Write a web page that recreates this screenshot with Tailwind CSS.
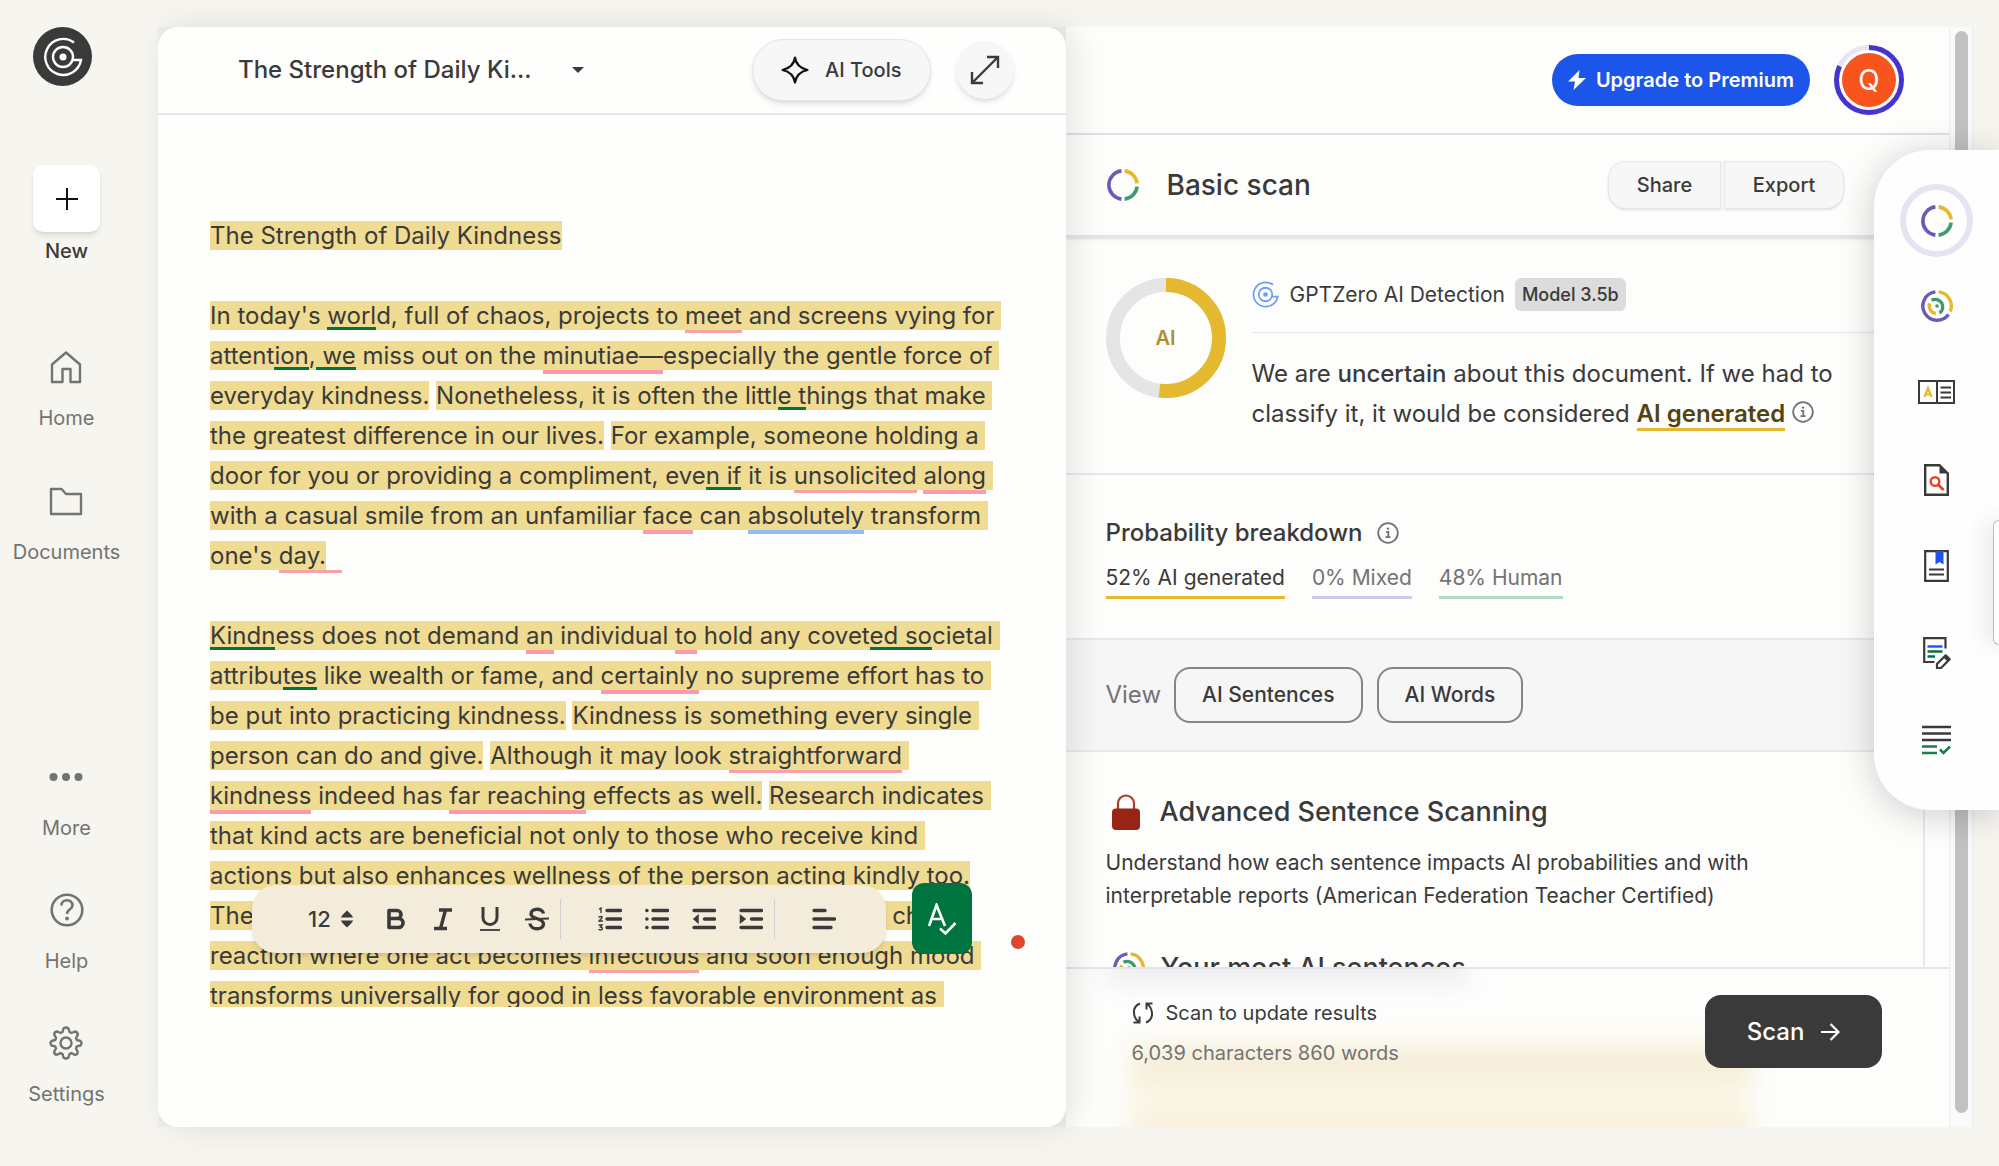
<!DOCTYPE html>
<html lang="en">
<head>
    <meta charset="UTF-8">
    <meta name="viewport" content="width=device-width, initial-scale=1.0">
    <title>The Strength of Daily Kindness</title>
    <script src="https://cdn.jsdelivr.net/npm/@tailwindcss/browser@4"></script>
</head>
<body class="bg-[#f6f5f0] font-['Inter',sans-serif] text-[#3a3a3a]">
    <!-- Shared icons -->
    <svg class="hidden">
        <symbol id="logo" viewBox="0 0 40 40" fill="none" stroke="currentColor">
            <path d="M31 5.5A18 18 0 1 0 38 23H29" />
            <circle cx="20" cy="20" r="10" />
            <circle cx="20" cy="20" r="3.5" fill="currentColor" stroke="none" />
        </symbol>
        <symbol id="ring" viewBox="0 0 32 32" fill="none" stroke-width="3.6">
            <path d="M14.4 1.9A14.2 14.2 0 0 0 14.4 30.1" stroke="#6a5cb5" />
            <path d="M17.6 1.9A14.2 14.2 0 0 1 30.1 14.4" stroke="#e5b92f" />
            <path d="M30.1 17.6A14.2 14.2 0 0 1 17.6 30.1" stroke="#3f9a6e" />
        </symbol>
        <symbol id="rings" viewBox="0 0 32 32" fill="none" stroke-width="3.4">
            <path d="M14.4 1.9A14.2 14.2 0 1 0 27.5 24.4" stroke="#6a5cb5" />
            <path d="M17.6 1.9A14.2 14.2 0 0 1 29.2 21.5" stroke="#e5b92f" />
            <path d="M10.5 10.3A7.6 7.6 0 0 1 18.5 23.2" stroke="#3f9a6e" />
            <path d="M8.8 13.4A7.6 7.6 0 0 0 14.8 23.6" stroke="#e5b92f" />
            <circle cx="16" cy="16" r="1.8" fill="#3f9a6e" stroke="none" />
        </symbol>
        <symbol id="info" viewBox="0 0 22 22" fill="none" stroke="#737373" stroke-width="1.8">
            <circle cx="11" cy="11" r="9.8" />
            <path d="M9 9.8h2.3v5M8.5 15.2h5" />
            <circle cx="11" cy="6.6" r="1.2" fill="#737373" stroke="none" />
        </symbol>
    </svg>

    <div class="flex h-screen overflow-hidden pt-[27px] pr-[26px] pb-[39px]">
        <!-- Sidebar -->
        <aside class="flex w-[158px] shrink-0 flex-col">
            <a href="#" aria-label="GPTZero" class="ml-[33px] flex size-[59px] items-center justify-center rounded-full bg-[#3a3a3a] text-white">
                <svg class="size-10" stroke-width="2.4"><use href="#logo" /></svg>
            </a>
            <nav class="mt-[79px] flex w-[133px] flex-1 flex-col items-center text-xl text-[#737373]">
                <a href="#" class="flex h-[100px] flex-col items-center justify-between font-medium text-[#3a3a3a]">
                    <span class="flex size-[67px] items-center justify-center rounded-[10px] bg-white shadow-md">
                        <svg class="size-6" viewBox="0 0 24 24" stroke="#111" stroke-width="2"><path d="M12 1v22M1 12h22" /></svg>
                    </span>
                    New
                </a>
                <a href="#" class="mt-[85px] flex h-[82px] flex-col items-center justify-between">
                    <svg class="size-[34px]" viewBox="0 0 34 34" fill="none" stroke="currentColor" stroke-width="2.4" stroke-linejoin="round"><path d="M3 32V14.5L17 2.5 31 14.5V32H21.5V19H13.5V32z" /></svg>
                    Home
                </a>
                <a href="#" class="mt-[52px] flex h-[82px] flex-col items-center justify-between">
                    <svg class="size-[34px]" viewBox="0 0 34 34" fill="none" stroke="currentColor" stroke-width="2.4" stroke-linejoin="round"><path d="M2 5h10.5L17 10H32V30H2z" /></svg>
                    Documents
                </a>
                <a href="#" class="mt-auto flex h-[82px] flex-col items-center justify-between">
                    <svg class="size-[34px]" viewBox="0 0 34 34" fill="currentColor"><circle cx="4.5" cy="17" r="4" /><circle cx="17" cy="17" r="4" /><circle cx="29.5" cy="17" r="4" /></svg>
                    More
                </a>
                <a href="#" class="mt-[51px] flex h-[82px] flex-col items-center justify-between">
                    <svg class="size-[34px]" viewBox="0 0 34 34" fill="none" stroke="currentColor" stroke-width="2.6"><circle cx="17" cy="17" r="15.3" /><path d="M11.5 12.5C11.5 5.5 22.5 5.5 22.5 12.3 22.5 16.5 17 16 17 21" /><circle cx="17" cy="25.5" r="1.9" fill="currentColor" stroke="none" /></svg>
                    Help
                </a>
                <a href="#" class="mt-[51px] mb-[19px] flex h-[82px] flex-col items-center justify-between">
                    <svg class="size-[34px]" viewBox="0 0 34 34" fill="none" stroke="currentColor" stroke-width="2.4" stroke-linejoin="round"><circle cx="17" cy="17" r="5.5" /><path d="M14.5 2.5Q17 .5 19.5 2.5L20.5 6 22.5 7 26 5.5Q29 6 28.8 9L27 12 27.8 14 31.5 15Q33.5 17 31.5 19.5L27.8 20.3 27 22.5 28.8 26Q28.5 29 25.5 28.8L22.5 27 20.5 28 19.5 31.5Q17 33.5 14.5 31.5L13.5 28 11.5 27 8 28.8Q5 28.5 5.2 25.5L7 22.5 6.2 20.3 2.5 19.5Q.5 17 2.5 15L6.2 14 7 12 5.2 8.5Q5.5 5.5 8.5 5.5L11.5 7 13.5 6z" /></svg>
                    Settings
                </a>
            </nav>
        </aside>

        <div class="grid min-w-0 flex-1 grid-cols-2 bg-[#efeeea]">
            <!-- Editor -->
            <main class="relative z-10 flex min-h-0 flex-col rounded-[20px] bg-[#fefefd] shadow-[8px_0_32px_rgba(0,0,0,0.1)]">
                <header class="flex h-[88px] shrink-0 items-center border-b-2 border-[#e5e7eb] pr-[52px] pl-20">
                    <h1 class="text-2xl font-medium">The Strength of Daily Ki...</h1>
                    <button aria-label="Rename or switch document" class="ml-9 p-1">
                        <svg class="h-2 w-3" viewBox="0 0 12 8" fill="#3a3a3a"><path d="M0 1h12L6 7z" /></svg>
                    </button>
                    <button class="ml-auto flex h-[62px] items-center gap-4 rounded-full border border-[#e5e5e5] bg-[#f7f7f8] px-7 text-xl font-medium shadow-md">
                        <svg class="size-7" viewBox="0 0 28 28" fill="none" stroke="#111" stroke-width="2.2" stroke-linejoin="round"><path d="M14 1.5Q15.5 11.5 26.5 14 15.5 16.5 14 26.5 12.5 16.5 1.5 14 12.5 11.5 14 1.5z" /></svg>
                        AI Tools
                    </button>
                    <button aria-label="Full screen" class="ml-[25px] flex size-[58px] items-center justify-center rounded-full bg-[#f7f7f8] shadow-md">
                        <svg class="size-[30px]" viewBox="0 0 30 30" fill="none" stroke="#3a3a3a" stroke-width="2.4"><path d="M2 28L28 2M17 2H28V13M2 17V28H13" /></svg>
                    </button>
                </header>

                <article class="mx-[52px] mt-[101px] h-[791px] shrink-0 overflow-hidden text-2xl leading-10 whitespace-nowrap">
                    <p><span class="bg-[#f0db92]">The Strength of Daily Kindness</span></p>
                    <p class="mt-10">
                        <span class="bg-[#f0db92]">In today's <span class="shadow-[inset_0_-3px_#00743f]">worl</span>d, full of chaos, projects to <span class="border-b-3 border-[#f5a3a6]">meet</span> and screens vying for&nbsp;</span><br>
                        <span class="bg-[#f0db92]">attent<span class="shadow-[inset_0_-3px_#00743f]">ion</span>,<span class="shadow-[inset_0_-3px_#00743f]"> we</span> miss out on the <span class="border-b-4 border-[#ff9aaa]">minutiae—</span>especially the gentle force of&nbsp;</span><br>
                        <span class="bg-[#f0db92]">everyday kindness.</span> <span class="bg-[#f0db92]">Nonetheless, it is often the littl<span class="shadow-[inset_0_-3px_#00743f]">e t</span>hings that make&nbsp;</span><br>
                        <span class="bg-[#f0db92]">the greatest difference in our lives.</span> <span class="bg-[#f0db92]">For example, someone holding a&nbsp;</span><br>
                        <span class="bg-[#f0db92]">door for you or providing a compliment, eve<span class="shadow-[inset_0_-3px_#00743f]">n if</span> it is <span class="border-b-3 border-[#f5a3a6]">unsolicited</span> <span class="border-b-4 border-[#ff9aaa]">along</span>&nbsp;</span><br>
                        <span class="bg-[#f0db92]">with a casual smile from an unfamiliar <span class="border-b-4 border-[#ff9aaa]">face</span> can <span class="border-b-4 border-[#93bdf5]">absolutely</span> transform&nbsp;</span><br>
                        <span class="bg-[#f0db92]">one's </span><span class="border-b-3 border-[#f5a3a6] pr-4"><span class="bg-[#f0db92]">day.</span></span>
                    </p>
                    <p class="mt-10">
                        <span class="bg-[#f0db92]"><span class="shadow-[inset_0_-3px_#00743f]">Kindn</span>ess does not demand <span class="border-b-4 border-[#ff9aaa]">an</span> individual <span class="border-b-4 border-[#ff9aaa]">to</span> hold any covet<span class="shadow-[inset_0_-3px_#00743f]">ed so</span>cietal&nbsp;</span><br>
                        <span class="bg-[#f0db92]">attribu<span class="shadow-[inset_0_-3px_#00743f]">tes</span> like wealth or fame, and <span class="border-b-4 border-[#ff9aaa]">certainly</span> no supreme effort has to&nbsp;</span><br>
                        <span class="bg-[#f0db92]">be put into practicing kindness.</span> <span class="bg-[#f0db92]">Kindness is something every single&nbsp;</span><br>
                        <span class="bg-[#f0db92]">person can do and give.</span> <span class="bg-[#f0db92]">Although it may look <span class="border-b-3 border-[#f5a3a6]">straightforward</span>&nbsp;</span><br>
                        <span class="bg-[#f0db92]"><span class="border-b-4 border-[#ff9aaa]">kindness</span> indeed has <span class="border-b-4 border-[#ff9aaa]">far reaching</span> effects as well.</span> <span class="bg-[#f0db92]">Research indicates&nbsp;</span><br>
                        <span class="bg-[#f0db92]">that kind acts are beneficial not only to those who receive kind&nbsp;</span><br>
                        <span class="bg-[#f0db92]">actions but also enhances wellness of the person acting kindly too.</span><br>
                        <span class="bg-[#f0db92]">The smallest gestures of good will can set off a long, happy chain&nbsp;</span><br>
                        <span class="bg-[#f0db92]">reaction where one act becomes <span class="border-b-3 border-[#f5a3a6]">infectious</span> and soon enough mood&nbsp;</span><br>
                        <span class="bg-[#f0db92]">transforms universally for good in less favorable environment as&nbsp;</span>
                    </p>
                </article>

                <!-- Formatting toolbar -->
                <div class="absolute bottom-[174px] left-[94px] flex h-[68px] w-[634px] items-center rounded-[24px] bg-[#f4ecda] pl-[52px] shadow-md">
                    <label class="relative flex items-center">
                        <span class="sr-only">Font size</span>
                        <select class="w-[68px] appearance-none pl-1 text-[22px] font-medium outline-none"><option>12</option></select>
                        <svg class="pointer-events-none absolute right-[19px] h-[18px] w-3" viewBox="0 0 12 18" fill="#3a3a3a"><path d="M0 7.5Q0 6 6 .5 12 6 12 7.5zM0 10.5H12Q12 12 6 17.5 0 12 0 10.5z" /></svg>
                    </label>
                    <button aria-label="Bold" class="flex w-[47px] justify-center"><svg class="size-6" viewBox="0 0 24 24" fill="none" stroke="#3a3a3a" stroke-width="3.6"><path d="M5 3.5H13A4 4 0 0 1 13 11.5H5zM5 11.5H14.5A4.5 4.5 0 0 1 14.5 20.5H5z" stroke-linejoin="round" /></svg></button>
                    <button aria-label="Italic" class="flex w-[47px] justify-center"><svg class="size-6" viewBox="0 0 24 24" fill="none" stroke="#3a3a3a" stroke-width="3.4"><path d="M8 3H21M3 21.5H16M14.5 3L9.5 21.5" /></svg></button>
                    <button aria-label="Underline" class="flex w-[47px] justify-center"><svg class="size-6" viewBox="0 0 24 24" fill="none" stroke="#3a3a3a" stroke-width="3"><path d="M5 0V10.5A7 7 0 0 0 19 10.5V0" /><path d="M2 23H22" stroke-width="1.8" /></svg></button>
                    <button aria-label="Strikethrough" class="flex w-[47px] justify-center"><svg class="size-6" viewBox="0 0 24 24" fill="none" stroke="#3a3a3a" stroke-width="3.4"><path d="M18.5 6.5C17.5 .8 6 .8 6 7 6 12.5 18.5 10.5 18.5 17 18.5 23.5 5.5 23.5 5 16.5" /><path d="M0 12.5L24 11.5" stroke-width="2" /></svg></button>
                    <span class="h-10 w-px bg-[#cfcfd2]"></span>
                    <button aria-label="Numbered list" class="ml-[25px] flex w-[47px] justify-center"><svg class="size-6" viewBox="0 0 24 24" fill="none" stroke="#3a3a3a" stroke-width="3.4" stroke-linecap="round"><path d="M9 3.5H22.5M9 12H22.5M9 20.5H22.5" /><path d="M1.5 2L3 1V5.5M1 10Q4.5 8.5 4 11L1 14H4.5M1 18H4L2.5 20Q5 20.5 4 22.5 2.5 23.5 1 22.5" stroke-width="1.4" /></svg></button>
                    <button aria-label="Bulleted list" class="flex w-[47px] justify-center"><svg class="size-6" viewBox="0 0 24 24" fill="none" stroke="#3a3a3a" stroke-width="3.4" stroke-linecap="round"><path d="M8 3.5H22.5M8 12H22.5M8 20.5H22.5M1.8 3.5H2M1.8 12H2M1.8 20.5H2" /></svg></button>
                    <button aria-label="Decrease indent" class="flex w-[47px] justify-center"><svg class="size-6" viewBox="0 0 24 24" fill="none" stroke="#3a3a3a" stroke-width="3.4" stroke-linecap="round"><path d="M2 3.5H22.5M12.5 12H22.5M2 20.5H22.5" /><path d="M6 8.5L2 12 6 15.5z" stroke-width="1.5" fill="#3a3a3a" /></svg></button>
                    <button aria-label="Increase indent" class="flex w-[47px] justify-center"><svg class="size-6" viewBox="0 0 24 24" fill="none" stroke="#3a3a3a" stroke-width="3.4" stroke-linecap="round"><path d="M2 3.5H22.5M12.5 12H22.5M2 20.5H22.5" /><path d="M1.5 8.5L6 12 1.5 15.5z" stroke-width="1.5" fill="#3a3a3a" /></svg></button>
                    <span class="h-10 w-px bg-[#cfcfd2]"></span>
                    <button aria-label="Align left" class="ml-[25px] flex w-[47px] justify-center"><svg class="size-6" viewBox="0 0 24 24" fill="none" stroke="#3a3a3a" stroke-width="3.4" stroke-linecap="round"><path d="M2 3.5H13M2 12H22.5M2 20.5H19" /></svg></button>
                </div>
                <button aria-label="Check writing" class="absolute right-[94px] bottom-[173px] flex h-[71px] w-[60px] items-center justify-center rounded-xl bg-[#00743f]">
                    <svg class="h-8 w-[30px]" viewBox="0 0 30 32" fill="none" stroke="#fff" stroke-width="2.6"><path d="M2 23L9.5 2 18 23M5 16H15.5M13 25.5L18.5 30.5 28.5 20" /></svg>
                </button>
                <span class="absolute right-[41px] bottom-[178px] size-[14px] rounded-full bg-[#e0452f]"></span>
            </main>

            <!-- Scan panel -->
            <section class="flex min-h-0">
                <div class="flex min-w-0 flex-1 flex-col bg-[#fdfdfc]">
                    <div class="flex h-[108px] shrink-0 items-center justify-end border-b-2 border-[#e2e2e4] pr-[45px]">
                        <button class="flex h-[52px] items-center gap-[10px] rounded-full bg-[#1c55ea] px-4 text-xl font-semibold text-white">
                            <svg class="h-5 w-[18px]" viewBox="0 0 18 20" fill="#fff"><path d="M11.5 0L0 11.5H7L5.5 20 18 8H10.5z" /></svg>
                            Upgrade to Premium
                        </button>
                        <button aria-label="Account" class="relative ml-6 flex size-[70px] items-center justify-center">
                            <svg class="absolute inset-0 size-full -rotate-90" viewBox="0 0 70 70" fill="none" stroke-width="5"><circle cx="35" cy="35" r="32.5" stroke="#e6e7ee" /><circle cx="35" cy="35" r="32.5" stroke="#4635cc" pathLength="100" stroke-dasharray="82 100" /></svg>
                            <span class="flex size-[54px] items-center justify-center rounded-full bg-[#f8541d] text-[28px] text-white">Q</span>
                        </button>
                    </div>

                    <div class="flex h-[103px] shrink-0 items-center border-b-3 border-[#e3e6ec] pr-[105px] pl-[41px] shadow-sm">
                        <svg class="size-8"><use href="#ring" /></svg>
                        <h2 class="ml-7 text-[28px] font-medium">Basic scan</h2>
                        <div class="ml-auto flex gap-[3px] text-xl font-medium">
                            <button class="h-[48px] w-[113px] rounded-l-[18px] border border-[#e8e8ea] bg-[#f7f7f8] shadow-sm">Share</button>
                            <button class="h-[48px] w-[120px] rounded-r-[18px] border border-[#e8e8ea] bg-[#f7f7f8] shadow-sm">Export</button>
                        </div>
                    </div>

                    <div class="min-h-0 flex-1 overflow-hidden">
                        <div class="flex h-[237px] border-b-2 border-[#e8e9ee] pt-10 pl-10">
                            <div class="relative flex size-[120px] shrink-0 items-center justify-center text-xl font-semibold text-[#ad8f33]">
                                <svg class="absolute inset-0 size-full -rotate-90" viewBox="0 0 120 120" fill="none" stroke-width="14"><circle cx="60" cy="60" r="53" stroke="#e5e5e5" /><circle cx="60" cy="60" r="53" stroke="#e5b92f" pathLength="100" stroke-dasharray="52 100" /></svg>
                                AI
                            </div>
                            <div class="ml-[26px] flex-1">
                                <div class="flex h-[55px] items-start border-b border-[#e3e4ec]">
                                    <div class="flex h-[33px] items-center text-[21px]">
                                        <svg class="size-[27px] text-[#6d9ef7]" stroke-width="2.6"><use href="#logo" /></svg>
                                        <span class="ml-[11px]">GPTZero AI Detection</span>
                                        <span class="ml-[10px] rounded-md bg-[#dcdcdc] px-[7px] text-lg leading-[33px] font-medium">Model 3.5b</span>
                                    </div>
                                </div>
                                <p class="mt-[21px] text-2xl leading-10">
                                    We are <b class="font-medium">uncertain</b> about this document. If we had to<br>
                                    classify it, it would be considered <a href="#" class="border-b-3 border-[#e5b92f] font-semibold text-[#54430f]">AI generated</a>
                                    <svg class="inline size-[22px] align-[-1px]"><use href="#info" /></svg>
                                </p>
                            </div>
                        </div>

                        <div class="h-[165px] border-b-2 border-[#e8e9ee] pt-10 pl-10">
                            <h3 class="flex items-center gap-[14px] text-2xl leading-9 font-medium">Probability breakdown <svg class="size-[22px]"><use href="#info" /></svg></h3>
                            <div class="mt-[9px] flex gap-[27px] text-[21px] leading-9 text-[#737373]">
                                <span class="border-b-3 border-[#e5b92f] text-[#3a3a3a]">52% AI generated</span>
                                <span class="border-b-3 border-[#cfc9ea]">0% Mixed</span>
                                <span class="border-b-3 border-[#b5d8c6]">48% Human</span>
                            </div>
                        </div>

                        <div class="flex h-[112px] items-center border-b-2 border-[#e8e9ee] bg-[#f6f6f7] pl-10">
                            <span class="text-2xl text-[#737373]">View</span>
                            <button class="ml-[13px] h-14 rounded-2xl border-2 border-[#858585] px-[26px] text-[21px] font-medium">AI Sentences</button>
                            <button class="ml-[14px] h-14 rounded-2xl border-2 border-[#858585] px-[26px] text-[21px] font-medium">AI Words</button>
                        </div>

                        <div class="mr-6 h-[400px] border-r-2 border-[#e8e9ee] pt-10 pl-10">
                            <h3 class="flex h-10 items-center gap-5 pl-[6px] text-[27px] font-medium">
                                <svg class="h-9 w-7" viewBox="0 0 28 36"><path d="M6 18V9.5A8 8 0 0 1 22 9.5V18" fill="none" stroke="#b03a2a" stroke-width="2.2" /><rect y="14.5" width="28" height="21.5" rx="4" fill="#972415" /></svg>
                                Advanced Sentence Scanning
                            </h3>
                            <p class="mt-[14px] text-[21px] leading-[33px]">
                                Understand how each sentence impacts AI probabilities and with<br>
                                interpretable reports (American Federation Teacher Certified)
                            </p>
                            <h3 class="mt-9 flex h-10 items-center gap-4 pl-[7px] text-[27px] font-medium">
                                <svg class="size-8"><use href="#rings" /></svg>
                                Your most AI sentences
                            </h3>
                        </div>
                    </div>

                    <!-- Footer -->
                    <footer class="relative flex h-[160px] shrink-0 justify-between overflow-hidden border-t-2 border-[#e3e4ec] pr-[67px] pl-[66px]">
                        <div class="absolute top-[72px] right-[200px] left-[62px] h-24 bg-[#fcf7e8] blur-md"></div>
                        <div class="absolute top-[84px] right-[200px] left-[72px] h-7 bg-[#f3ebd6] blur-md"></div>
                        <div class="absolute top-[144px] right-[200px] left-[72px] h-7 bg-[#f7efd9] blur-md"></div>
                        <div class="absolute -top-2 left-10 h-5 w-[360px] bg-[#e9e9ed] blur-md"></div>
                        <div class="relative pt-6 text-xl leading-10">
                            <p class="flex items-center gap-3">
                                <svg class="size-[22px]" viewBox="0 0 22 22" fill="none" stroke="#3a3a3a" stroke-width="2"><path d="M8 1.5Q1.5 4 2 11 2.5 17 6.5 19.5M1.5 20.5H7.5V14.5M14 20.5Q20.5 18 20 11 19.5 5 15.5 2.5M20.5 1.5H14.5V7.5" /></svg>
                                Scan to update results
                            </p>
                            <p class="text-[#737373]">6,039 characters 860 words</p>
                        </div>
                        <button class="relative mt-[26px] flex h-[73px] w-[177px] items-center justify-center gap-4 rounded-2xl bg-[#3a3a3a] text-2xl font-medium text-white">
                            Scan
                            <svg class="size-5" viewBox="0 0 20 20" fill="none" stroke="#fff" stroke-width="2.2"><path d="M1 10H18M10.5 2L18.5 10 10.5 18" /></svg>
                        </button>
                    </footer>
                </div>
                <div class="w-6 shrink-0 border-x border-[#ebebeb] bg-[#fafafa] pt-1 pb-[14px]">
                    <div class="mx-auto h-full w-[13px] rounded-full bg-[#c1c1c1]"></div>
                </div>
            </section>
        </div>
    </div>

    <!-- Tool dock -->
    <nav aria-label="Tools" class="fixed top-[150px] right-0 z-20 flex h-[660px] w-[125px] flex-col items-center rounded-l-[56px] bg-[#fefefe] pt-[34px] shadow-[0_4px_36px_rgba(0,0,0,0.2)]">
        <button aria-label="Basic scan" class="flex size-[73px] items-center justify-center rounded-full border-6 border-[#e6e3f3]"><svg class="size-8"><use href="#ring" /></svg></button>
        <button aria-label="Advanced scan" class="mt-8 flex size-[34px] items-center justify-center"><svg class="size-8"><use href="#rings" /></svg></button>
        <button aria-label="AI vocabulary" class="mt-[52px] flex h-[34px] items-center justify-center">
            <svg class="h-6 w-[37px]" viewBox="0 0 37 24" fill="none" stroke="#3a3a3a" stroke-width="2"><path d="M1 1H36V23H1zM19 1V23M22.5 7.5H33M22.5 12.5H33M22.5 17.5H33" /><path d="M6.5 17L10 8 13.5 17M7.5 14.5H12.5" stroke="#e5b92f" stroke-width="2.2" /></svg>
        </button>
        <button aria-label="Plagiarism" class="mt-[54px] flex h-[34px] items-center justify-center">
            <svg class="h-8 w-[25px]" viewBox="0 0 25 32" fill="none" stroke="#3a3a3a" stroke-width="2.4"><path d="M1.2 1.2H15.5L23.8 9.5V30.8H1.2z" /><path d="M15.5 1V9.5H24z" fill="#3a3a3a" stroke="none" /><circle cx="11" cy="17.5" r="4.3" stroke="#e0452f" /><path d="M14 20.5L19.5 26" stroke="#e0452f" stroke-width="2.8" /></svg>
        </button>
        <button aria-label="Sources" class="mt-[52px] flex h-[34px] items-center justify-center">
            <svg class="h-8 w-[25px]" viewBox="0 0 25 32" fill="none" stroke="#3a3a3a" stroke-width="2.2"><path d="M1.2 1.2H23.8V30.8H1.2zM5 19.5H20M5 24.5H20" /><path d="M11.5 1H19.5V14.5L15.5 12 11.5 14.5z" fill="#1c55ea" stroke="none" /></svg>
        </button>
        <button aria-label="Writing feedback" class="mt-[53px] flex h-[34px] items-center justify-center">
            <svg class="h-8 w-7" viewBox="0 0 28 32" fill="none" stroke="#3a3a3a" stroke-width="2.2"><path d="M22.5 11.5V1.2H1.2V25H11.5" /><path d="M4.5 9.5H19.5" stroke="#1c55ea" stroke-width="2.4" /><path d="M4.5 14.5H19.5M4.5 19.5H12" stroke="#00743f" stroke-width="2.4" /><path d="M14 31V27L22.5 18.5 26.5 22.5 18 31z" /><path d="M20.5 20.5L23.5 17.5 27.5 21.5 24.5 24.5z" fill="#3a3a3a" stroke="none" /></svg>
        </button>
        <button aria-label="Grammar check" class="mt-[53px] flex h-[34px] items-center justify-center">
            <svg class="h-[30px] w-[29px]" viewBox="0 0 29 30" fill="none" stroke="#3a3a3a" stroke-width="2.6"><path d="M0 2H29M0 8.5H29M0 15H29" /><path d="M0 21.5H15M0 28H15M18 24.5L21.5 28 28 21.5" stroke="#1c7c4c" /></svg>
        </button>
    </nav>
    <div class="fixed top-[520px] right-0 z-30 h-[125px] w-[6px] rounded-l-xl border border-r-0 border-[#bdbdbd] bg-white shadow-[0_0_24px_rgba(0,0,0,0.3)]"></div>
</body>
</html>
